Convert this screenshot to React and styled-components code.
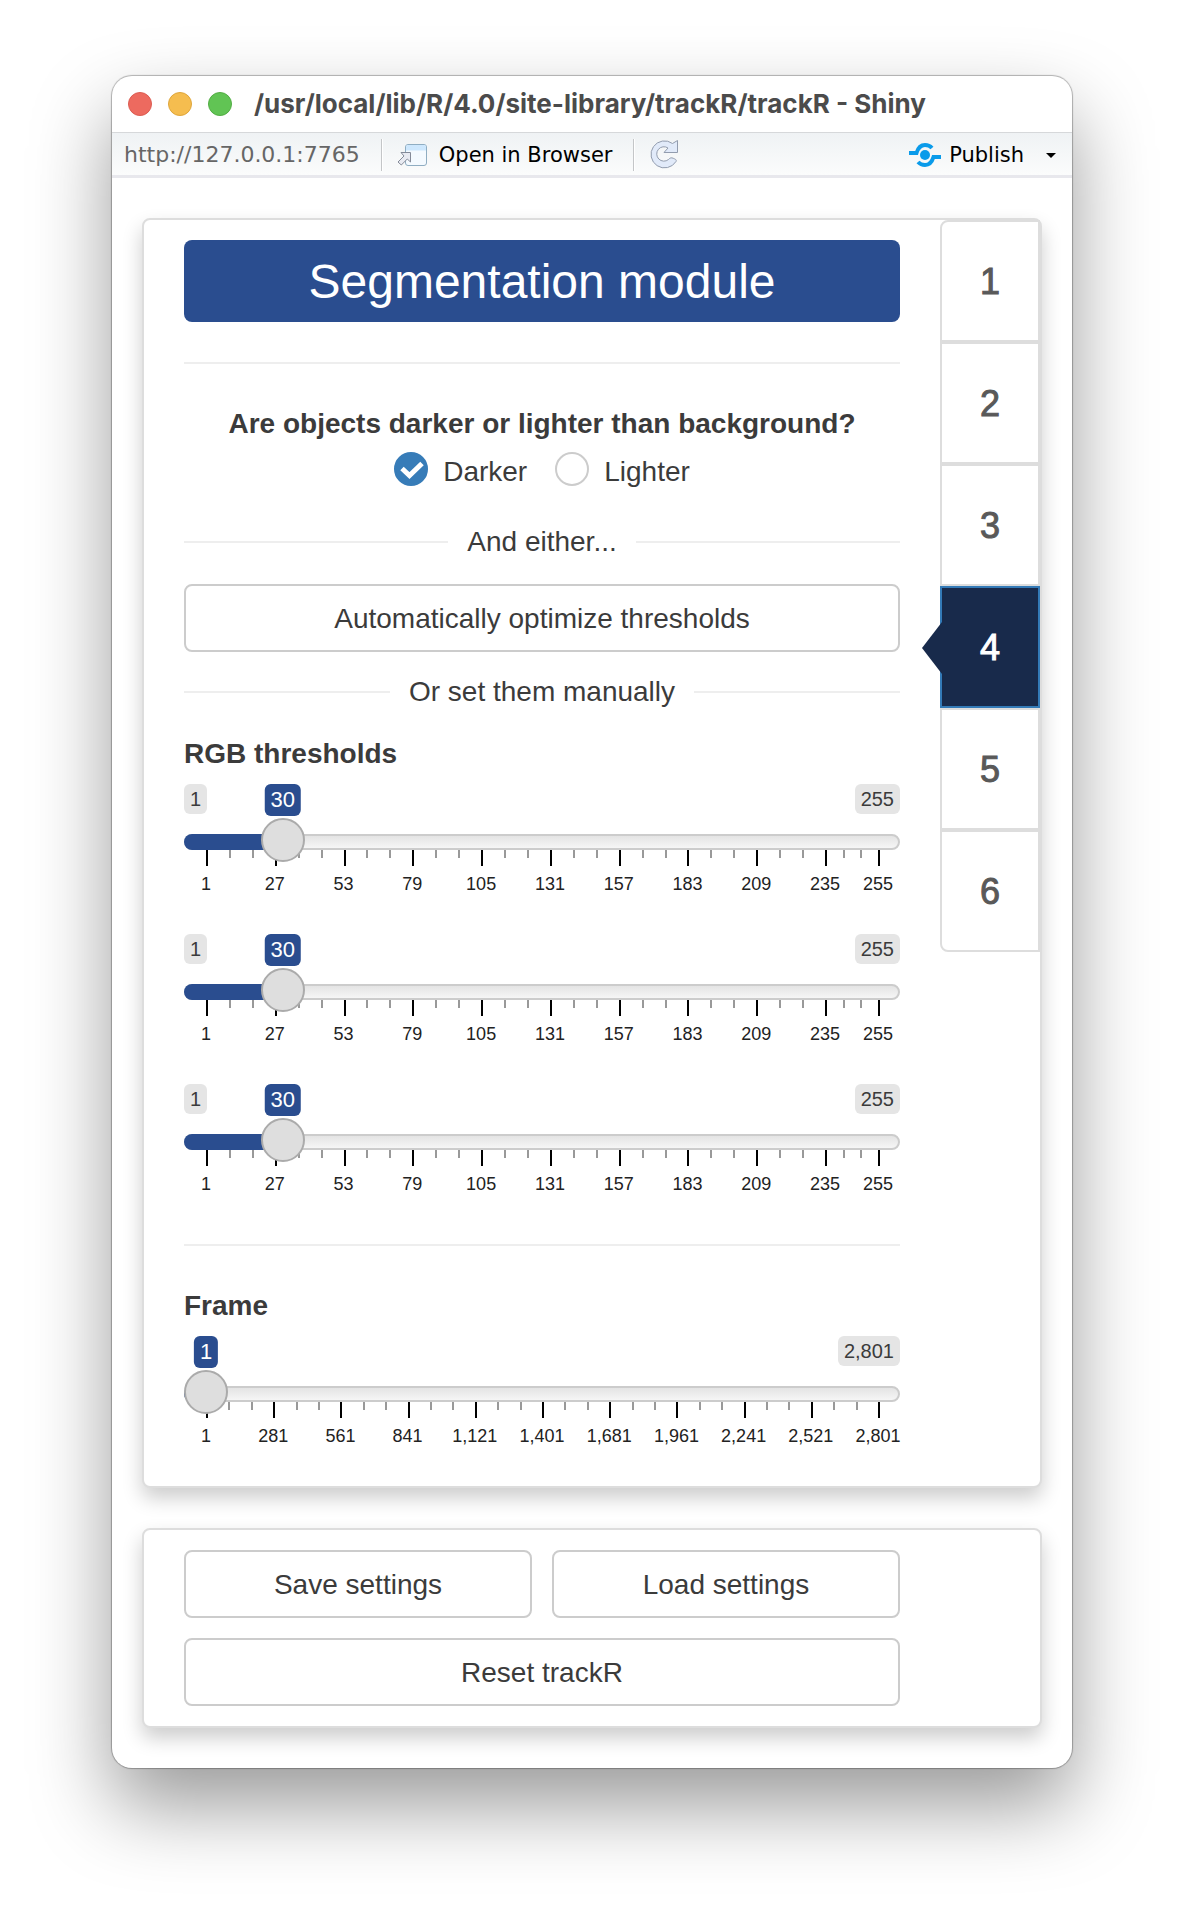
import React, { useId, useState } from "react";
import styled, { createGlobalStyle } from "styled-components";

const GlobalStyle = createGlobalStyle`
  *, *::before, *::after { box-sizing: border-box; }
  body {
    margin: 0;
    background: #fff;
    color: #3b3b3b;
    font-family: "Liberation Sans", Arial, sans-serif;
    font-size: 28px;
    line-height: 40px;
  }
  button, input { font: inherit; color: inherit; margin: 0; }
`;

const Desktop = styled.div`
  padding: 76px 112px 148px;
`;

const Window = styled.div`
  background: #fff;
  border-radius: 20px;
  box-shadow: 0 0 1px 1px rgba(0, 0, 0, 0.28), 0 38px 80px rgba(0, 0, 0, 0.4);
`;

const TitleBar = styled.header`
  display: flex;
  align-items: center;
  gap: 22px;
  height: 56px;
  padding: 0 16px;
`;

const Lights = styled.div`
  display: flex;
  gap: 16px;
`;

const Light = styled.button`
  width: 24px;
  height: 24px;
  padding: 0;
  border: 1px solid ${(p) => p.$edge};
  border-radius: 50%;
  background: ${(p) => p.$fill};
`;

const WindowTitle = styled.h1`
  margin: 0;
  color: #4b4b4b;
  font: 700 26px/40px Inter, sans-serif;
  white-space: nowrap;
`;

const Toolbar = styled.div`
  display: flex;
  align-items: center;
  height: 46px;
  padding: 2px 16px 0 12px;
  border-top: 1px solid #d6d8da;
  border-bottom: 3px solid #e8e8ed;
  background: linear-gradient(#eff2f4, #fbfcfc);
  color: #000;
  font: 21px/32px "DejaVu Sans", sans-serif;
  white-space: nowrap;
`;

const Address = styled.span`
  color: #666;
  font-size: 22px;
`;

const Separator = styled.span`
  width: 2px;
  height: 32px;
  margin: 0 14px 0 21px;
  background: linear-gradient(90deg, #c4c6c8 50%, #fff 50%);
`;

const ToolButton = styled.button`
  display: flex;
  align-items: center;
  gap: ${(p) => p.$gap || 12}px;
  padding: 0;
  border: 0;
  background: none;
`;

const Spacer = styled.span`
  flex: 1;
`;

const Caret = styled.span`
  margin-left: 14px;
  border: 5px solid transparent;
  border-top-color: #000;
  border-bottom: 0;
`;

const Content = styled.main`
  display: flex;
  flex-direction: column;
  gap: 40px;
  padding: 40px 30px;
`;

const Panel = styled.section`
  display: flex;
  border: 2px solid #ddd;
  border-radius: 8px;
  background: #fff;
  box-shadow: 0 10px 20px rgba(0, 0, 0, 0.2);
`;

const PanelBody = styled.div`
  flex: 1;
  min-width: 0;
  padding: 20px 40px ${(p) => (p.$flush ? 0 : 20)}px;
`;

const ModuleTitle = styled.h2`
  margin: 0;
  padding-top: 2px;
  border-radius: 8px;
  background: #2a4d8f;
  color: #fff;
  font-size: 48px;
  font-weight: 400;
  line-height: 80px;
  text-align: center;
`;

const Rule = styled.hr`
  height: 2px;
  margin: ${(p) => p.$top}px 0 40px;
  border: 0;
  background: #eee;
`;

const Choice = styled.fieldset`
  display: flex;
  justify-content: center;
  gap: 28px;
  margin: 0;
  padding: 8px 0 0;
  border: 0;
`;

const Question = styled.legend`
  padding: 0;
  margin: 0 auto;
  font-weight: 700;
`;

const Option = styled.label`
  display: flex;
  gap: 15px;
`;

const RadioBox = styled.span`
  display: grid;
  width: 34px;
  height: 34px;

  & > * { grid-area: 1 / 1; }
  svg { pointer-events: none; }
`;

const Radio = styled.input`
  appearance: none;
  width: 34px;
  height: 34px;
  border: 2px solid #ccc;
  border-radius: 50%;
  background: #fff;

  &:checked {
    border-color: #377cb8;
    background: #377cb8;
  }
`;

const Divider = styled.p`
  display: flex;
  align-items: center;
  gap: 19px;
  margin: ${(p) => p.$top}px 0 22px;

  &::before, &::after {
    content: "";
    flex: 1;
    height: 2px;
    background: #eee;
  }
`;

const Button = styled.button`
  width: 100%;
  height: 68px;
  padding: 2px 24px 0;
  border: 2px solid #ccc;
  border-radius: 8px;
  background: #fff;
`;

const ButtonGrid = styled.div`
  display: grid;
  grid-template-columns: 1fr 1fr;
  gap: 20px;

  & > :last-child { grid-column: 1 / -1; }
`;

const GroupLabel = styled.label`
  display: block;
  margin-bottom: 10px;
  font-weight: 700;
`;

const SliderBox = styled.div`
  padding-bottom: 40px;
`;

const Readout = styled.div`
  position: relative;
  display: flex;
  align-items: flex-start;
  height: 34px;
`;

const Limit = styled.span`
  padding: 0 6px;
  border-radius: 6px;
  background: #e5e5e5;
  font-size: 20px;
  line-height: 30px;

  &:last-of-type { margin-left: auto; }
`;

const Bubble = styled.output`
  position: absolute;
  top: 0;
  transform: translateX(-50%);
  padding: 0 6px;
  border-radius: 6px;
  background: #2a4d8f;
  color: #fff;
  font-size: 22px;
  line-height: 32px;
`;

const Track = styled.div`
  display: grid;
  align-items: start;

  & > * { grid-area: 1 / 1; }
`;

const Rail = styled.div`
  height: 16px;
  margin-top: 16px;
  border: 2px solid #ccc;
  border-radius: 8px;
  background: linear-gradient(#e4e4e4, #f6f6f6);
`;

const Fill = styled.div`
  height: 16px;
  margin-top: 16px;
  border-radius: 8px 0 0 8px;
  background: #2a4d8f;
`;

const Range = styled.input`
  appearance: none;
  z-index: 1;
  width: 100%;
  height: 44px;
  background: transparent;

  &::-webkit-slider-thumb {
    appearance: none;
    width: 44px;
    height: 44px;
    border: 2px solid #ababab;
    border-radius: 50%;
    background: #dedede;
  }
`;

const Scale = styled.div`
  display: flex;
  margin-top: 32px;
  padding: 0 22px;
`;

const Segment = styled.div`
  flex: ${(p) => p.$span} 0 0;
  min-width: 0;
`;

const Ticks = styled.div`
  display: grid;
  grid-template-columns: repeat(3, 1fr);
  height: 16px;
`;

const Tick = styled.span`
  width: 2px;
  height: ${(p) => (p.$major ? 16 : 8)}px;
  background: ${(p) => (p.$major ? "#000" : "#999")};
`;

const Mark = styled.div`
  display: flex;
  justify-content: center;
  width: 0;
  margin-top: 8px;
  color: #222;
  font-size: 18px;
  line-height: 20px;
`;

const Tabs = styled.nav`
  display: flex;
  flex-direction: column;
  width: 100px;
`;

const Tab = styled.button`
  position: relative;
  height: 122px;
  padding: 2px 0 0;
  border: 2px solid ${(p) => (p.$active ? "#337ab7" : "#ddd")};
  background: ${(p) => (p.$active ? "#182a4b" : "#fff")};
  color: ${(p) => (p.$active ? "#fff" : "#595959")};
  font-size: 36px;
  -webkit-text-stroke: 1px currentColor;

  &:first-child { border-top-left-radius: 8px; }
  &:last-child { border-bottom-left-radius: 8px; }

  &::before {
    content: "";
    display: ${(p) => (p.$active ? "block" : "none")};
    position: absolute;
    top: 34px;
    right: 100%;
    width: 20px;
    height: 52px;
    border: solid transparent;
    border-width: 26px 20px 26px 0;
    border-right-color: #182a4b;
  }
`;

const TabGutter = styled.div`
  width: 100px;
`;

const format = (n) => n.toLocaleString("en-US");

function Slider({ id, label, min, max, step, initial }) {
  const [value, setValue] = useState(initial);
  const fraction = (value - min) / (max - min);
  const center = `calc(22px + (100% - 44px) * ${fraction})`;
  const stops = [];
  for (let v = min; v < max; v += step) stops.push(v);

  return (
    <SliderBox>
      <Readout>
        {fraction > 0.06 && <Limit>{format(min)}</Limit>}
        <Bubble htmlFor={id} style={{ left: center }}>{format(value)}</Bubble>
        <Limit>{format(max)}</Limit>
      </Readout>
      <Track>
        <Rail />
        <Fill style={{ width: center }} />
        <Scale>
          {stops.map((v) => (
            <Segment key={v} $span={Math.min(step, max - v)}>
              <Ticks>
                <Tick $major />
                <Tick />
                <Tick />
              </Ticks>
              <Mark>{format(v)}</Mark>
            </Segment>
          ))}
          <Segment $span={0}>
            <Tick as="div" $major />
            <Mark>{format(max)}</Mark>
          </Segment>
        </Scale>
        <Range
          id={id}
          type="range"
          aria-label={label}
          min={min}
          max={max}
          value={value}
          onChange={(e) => setValue(Number(e.target.value))}
        />
      </Track>
    </SliderBox>
  );
}

function RadioOption({ label, checked, onSelect }) {
  const id = useId();
  return (
    <Option htmlFor={id}>
      <RadioBox>
        <Radio id={id} type="radio" name="contrast" checked={checked} onChange={onSelect} />
        {checked && (
          <svg width="34" height="34" viewBox="0 0 34 34" fill="none" stroke="#fff" strokeWidth="5">
            <path d="M8 16.500l7.500 7L28 11.500" />
          </svg>
        )}
      </RadioBox>
      {label}
    </Option>
  );
}

const OpenIcon = () => (
  <svg width="30" height="24" viewBox="0 0 30 24">
    <rect x="8.500" y="1.500" width="21" height="21" rx="2.500" fill="#f4faff" stroke="#8fadc2" />
    <path d="M9 7.500V4a2 2 0 0 1 2-2h16a2 2 0 0 1 2 2v3.500z" fill="#cde7fd" />
    <path d="M4 9.500h9.500V19l-3.200-3-6 6L1 19l6-6z" fill="#e9ebf2" stroke="#858b98" />
  </svg>
);

const RefreshIcon = () => (
  <svg width="30" height="32" viewBox="0 0 30 32">
    <path
      d="M23.500 4.500L28.500 1.500V13.500H15l4-4.500A7.200 7.200 0 1 0 19.500 20.500c1.500-1.800 3-2 4.500-1.300 2 .800 4 1.500 3 3.300A13.500 13.500 0 1 1 23.500 4.500z"
      fill="#e1eaf9"
      stroke="#929cae"
    />
  </svg>
);

const PublishIcon = () => (
  <svg width="32" height="24" viewBox="0 0 32 24" fill="none" stroke="#0a9bea" strokeWidth="4">
    <circle cx="16" cy="12" r="5" fill="#0a9bea" stroke="none" />
    <path d="M0 10h7.500C9 5 12 2 16 2c3 0 5 .800 7 3" />
    <path d="M32 14h-7.500C23 19 20 22 16 22c-3 0-5-.800-7-3" />
  </svg>
);

export default function App() {
  const [contrast, setContrast] = useState("Darker");
  const [tab, setTab] = useState(4);

  return (
    <>
      <GlobalStyle />
      <Desktop>
        <Window>
          <TitleBar>
            <Lights>
              <Light aria-label="Close" $fill="#ed6a5f" $edge="#dc5c52" />
              <Light aria-label="Minimize" $fill="#f5bd4f" $edge="#dfa63b" />
              <Light aria-label="Zoom" $fill="#61c454" $edge="#52ad43" />
            </Lights>
            <WindowTitle>/usr/local/lib/R/4.0/site-library/trackR/trackR - Shiny</WindowTitle>
          </TitleBar>
          <Toolbar>
            <Address>http://127.0.0.1:7765</Address>
            <Separator />
            <ToolButton>
              <OpenIcon />
              Open in Browser
            </ToolButton>
            <Separator />
            <ToolButton aria-label="Reload">
              <RefreshIcon />
            </ToolButton>
            <Spacer />
            <ToolButton $gap={8}>
              <PublishIcon />
              Publish
              <Caret />
            </ToolButton>
          </Toolbar>
          <Content>
            <Panel>
              <PanelBody $flush>
                <ModuleTitle>Segmentation module</ModuleTitle>
                <Rule $top={40} />
                <Choice>
                  <Question>Are objects darker or lighter than background?</Question>
                  {["Darker", "Lighter"].map((name) => (
                    <RadioOption
                      key={name}
                      label={name}
                      checked={contrast === name}
                      onSelect={() => setContrast(name)}
                    />
                  ))}
                </Choice>
                <Divider $top={30}>And either...</Divider>
                <Button>Automatically optimize thresholds</Button>
                <Divider $top={20}>Or set them manually</Divider>
                <GroupLabel htmlFor="red">RGB thresholds</GroupLabel>
                <Slider id="red" label="Red threshold" min={1} max={255} step={26} initial={30} />
                <Slider id="green" label="Green threshold" min={1} max={255} step={26} initial={30} />
                <Slider id="blue" label="Blue threshold" min={1} max={255} step={26} initial={30} />
                <Rule $top={10} />
                <GroupLabel htmlFor="frame">Frame</GroupLabel>
                <Slider id="frame" label="Frame" min={1} max={2801} step={280} initial={1} />
              </PanelBody>
              <Tabs>
                {[1, 2, 3, 4, 5, 6].map((n) => (
                  <Tab key={n} $active={tab === n} onClick={() => setTab(n)}>
                    {n}
                  </Tab>
                ))}
              </Tabs>
            </Panel>
            <Panel>
              <PanelBody>
                <ButtonGrid>
                  <Button>Save settings</Button>
                  <Button>Load settings</Button>
                  <Button>Reset trackR</Button>
                </ButtonGrid>
              </PanelBody>
              <TabGutter />
            </Panel>
          </Content>
        </Window>
      </Desktop>
    </>
  );
}
